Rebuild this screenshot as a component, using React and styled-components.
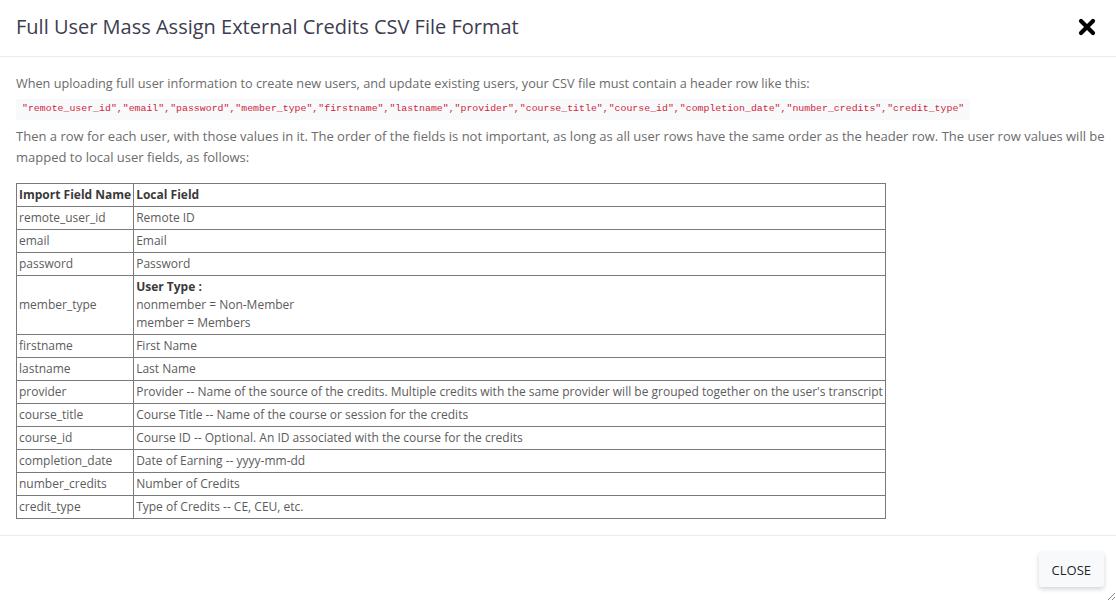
import styled, { createGlobalStyle } from 'styled-components'

const GlobalStyle = createGlobalStyle`
  html, body {
    margin: 0;
    padding: 0;
    background: #ffffff;
  }
  body {
    font-family: "Open Sans", "Liberation Sans", sans-serif;
  }
`

const Modal = styled.div`
  width: 1116px;
  height: 601px;
  display: flex;
  flex-direction: column;
  background: #fff;
  position: relative;
  box-sizing: border-box;
`

const Header = styled.div`
  height: 57px;
  flex-shrink: 0;
  box-sizing: border-box;
  display: flex;
  align-items: center;
  justify-content: space-between;
  padding: 0 16px 3px 16px;
  border-bottom: 1px solid #e9ecef;
`

const Title = styled.h4`
  margin: 0;
  font-size: 20px;
  font-weight: 400;
  color: #3b3d4f;
`

const CloseX = styled.button`
  border: 0;
  background: none;
  padding: 0;
  width: 18px;
  height: 18px;
  margin-right: 4px;
  cursor: pointer;
  display: flex;
`

const Body = styled.div`
  flex: 1;
  padding: 16px 8px 0 16px;
  line-height: 21px;
  color: #6b6b6b;
`

const Para = styled.p`
  margin: 0;
  font-size: ${p => p.$size || 13}px;
`

const Code = styled.pre`
  display: block;
  width: fit-content;
  margin: 5px 0 6px 0;
  padding: 3px 6px 4px 6px;
  background: #f8f9fa;
  border-radius: 3px;
  font-family: "Liberation Mono", "DejaVu Sans Mono", monospace;
  font-size: 9.9px;
  line-height: 14px;
  color: #d0273d;
`

const Table = styled.table`
  border-collapse: collapse;
  margin-top: 15px;
  font-size: 12px;
  line-height: 18px;
  color: #5c5c5c;
`

const Cell = styled.td`
  border: 1px solid #7a7a7a;
  padding: 2px 2px;
  white-space: nowrap;
  vertical-align: middle;
  font-weight: ${p => (p.$head ? 700 : 400)};
  color: ${p => (p.$head ? '#3a3a3a' : '#5c5c5c')};
`

const Strong = styled.strong`
  font-weight: 700;
  color: #3a3a3a;
`

const Footer = styled.div`
  height: 66px;
  box-sizing: border-box;
  border-top: 1px solid #e9ecef;
  display: flex;
  align-items: center;
  justify-content: flex-end;
  padding: 0 12px 0 0;
`

const Button = styled.button`
  font-family: "Open Sans", "Liberation Sans", sans-serif;
  font-size: 13px;
  color: #212529;
  background: #f8f9fa;
  border: 0;
  border-radius: 3px;
  height: 35px;
  padding: 0 13px;
  margin-top: 2px;
  box-shadow: 0 2px 5px rgba(0, 0, 0, 0.18);
  cursor: pointer;
`

const Grip = styled.svg`
  position: absolute;
  right: 1px;
  bottom: 1px;
`

const rows = [
    ['remote_user_id', 'Remote ID'],
    ['email', 'Email'],
    ['password', 'Password'],
    ['member_type', null],
    ['firstname', 'First Name'],
    ['lastname', 'Last Name'],
    ['provider', "Provider -- Name of the source of the credits. Multiple credits with the same provider will be grouped together on the user's transcript"],
    ['course_title', 'Course Title -- Name of the course or session for the credits'],
    ['course_id', 'Course ID -- Optional. An ID associated with the course for the credits'],
    ['completion_date', 'Date of Earning -- yyyy-mm-dd'],
    ['number_credits', 'Number of Credits'],
    ['credit_type', 'Type of Credits -- CE, CEU, etc.'],
]

const header = '"remote_user_id","email","password","member_type","firstname","lastname","provider","course_title","course_id","completion_date","number_credits","credit_type"'

export default function App() {
    return (
        <>
            <GlobalStyle />
            <Modal>
                <Header>
                    <Title>Full User Mass Assign External Credits CSV File Format</Title>
                    <CloseX aria-label="close">
                        <svg width="18" height="18" viewBox="0 0 18 18">
                            <path d="M3 3 L15 15 M15 3 L3 15" stroke="#000" strokeWidth="4.2" strokeLinecap="round" />
                        </svg>
                    </CloseX>
                </Header>
                <Body>
                    <Para $size={12.7}>When uploading full user information to create new users, and update existing users, your CSV file must contain a header row like this:</Para>
                    <Code>{header}</Code>
                    <Para>Then a row for each user, with those values in it. The order of the fields is not important, as long as all user rows have the same order as the header row. The user row values will be mapped to local user fields, as follows:</Para>
                    <Table>
                        <tbody>
                            <tr>
                                <Cell $head>Import Field Name</Cell>
                                <Cell $head>Local Field</Cell>
                            </tr>
                            {rows.map(([name, local]) => (
                                <tr key={name}>
                                    <Cell>{name}</Cell>
                                    <Cell>
                                        {local === null ? (
                                            <>
                                                <Strong>User Type :</Strong><br />
                                                nonmember = Non-Member<br />
                                                member = Members
                                            </>
                                        ) : local}
                                    </Cell>
                                </tr>
                            ))}
                        </tbody>
                    </Table>
                </Body>
                <Footer>
                    <Button>CLOSE</Button>
                </Footer>
                <Grip width="8" height="8" viewBox="0 0 8 8">
                    <path d="M1 8 L8 1 M5 8 L8 5" stroke="#888" strokeWidth="1" />
                </Grip>
            </Modal>
        </>
    )
}
